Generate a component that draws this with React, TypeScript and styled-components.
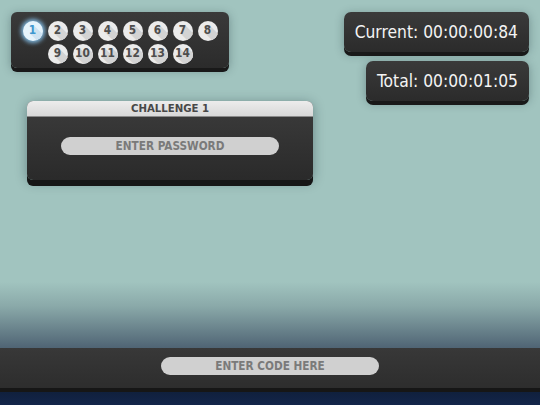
import React from "react";
import styled, { createGlobalStyle, css } from "styled-components";

const GlobalStyle = createGlobalStyle`
  html, body { margin: 0; padding: 0; height: 100%; }
  body { font-family: "DejaVu Sans", Verdana, sans-serif; }
  #root { height: 100%; }
`;

const condensed = css`
  font-family: "DejaVu Sans Condensed", "DejaVu Sans", sans-serif;
  font-stretch: condensed;
`;

const Page = styled.div`
  height: 100vh;
  display: flex;
  flex-direction: column;
  overflow: hidden;
`;

const Stage = styled.main`
  flex: 1;
  display: flex;
  justify-content: space-between;
  align-items: flex-start;
  padding: 12px 11px 0 11px;
  background: linear-gradient(to bottom, #a1c4bf 0%, #a1c4bf 81%, #8aa9a9 88%, #4f6474 100%);
`;

const LeftColumn = styled.div`
  display: flex;
  flex-direction: column;
  align-items: flex-start;
`;

const darkPanel = css`
  background: linear-gradient(to bottom, #3a3a3a 0%, #2b2b2b 100%);
  border-radius: 6px;
  box-shadow: 0 4px 0 #191919, 0 2px 10px rgba(20, 40, 50, 0.35);
`;

const NumberPanel = styled.nav`
  ${darkPanel};
  width: 218px;
  box-sizing: border-box;
  height: 56px;
  padding: 9px 11px 4px;
  display: flex;
  flex-wrap: wrap;
  justify-content: center;
  align-content: flex-start;
  column-gap: 5px;
  row-gap: 3px;
`;

const Level = styled.span<{ $active?: boolean }>`
  width: 20px;
  height: 20px;
  border-radius: 50%;
  overflow: hidden;
  display: flex;
  align-items: center;
  justify-content: center;
  ${condensed};
  font-weight: bold;
  font-size: 11.8px;
  line-height: 1;
  color: #4d4d4d;
  background: #ebebeb;
  text-shadow: 1px 1px 0 #d3d3d3, 2px 2px 0 #d3d3d3, 3px 3px 0 #d3d3d3,
    4px 4px 0 #d3d3d3, 5px 5px 0 #d3d3d3, 6px 6px 0 #d3d3d3, 7px 7px 0 #d3d3d3,
    8px 8px 0 #d3d3d3, 9px 9px 0 #d3d3d3, 10px 10px 0 #d3d3d3;
  ${(p) =>
    p.$active &&
    css`
      background: #e6f4fc;
      color: #3f97cf;
      text-shadow: 1px 1px 0 #cfe3f2, 2px 2px 0 #cfe3f2, 3px 3px 0 #cfe3f2,
        4px 4px 0 #cfe3f2, 5px 5px 0 #cfe3f2, 6px 6px 0 #cfe3f2,
        7px 7px 0 #cfe3f2, 8px 8px 0 #cfe3f2;
      box-shadow: 0 0 4px 2px rgba(140, 205, 250, 0.85);
    `}
`;

const ChallengePanel = styled.section`
  margin: 33px 0 0 16px;
  width: 286px;
  border-radius: 6px;
  overflow: hidden;
  background: linear-gradient(to bottom, #3c3c3c 0%, #2a2a2a 100%);
  box-shadow: 0 6px 0 #161616, 0 2px 12px rgba(20, 40, 50, 0.4);
`;

const ChallengeHeader = styled.h2`
  margin: 0;
  height: 16px;
  box-sizing: border-box;
  border-bottom: 1px solid #8a8a8a;
  background: linear-gradient(to bottom, #ececec 0%, #d8d8d8 100%);
  ${condensed};
  font-weight: bold;
  font-size: 11.3px;
  line-height: 16px;
  color: #484848;
  text-align: center;
`;

const ChallengeBody = styled.div`
  height: 63px;
  box-sizing: border-box;
  padding-top: 20px;
  display: flex;
  justify-content: center;
  align-items: flex-start;
`;

const PillInput = styled.input`
  width: 218px;
  height: 18px;
  box-sizing: border-box;
  border: none;
  outline: none;
  border-radius: 9px;
  padding: 0;
  background: #d0d0d0;
  ${condensed};
  font-weight: bold;
  font-size: 11.7px;
  text-align: center;
  color: #777;
  &::placeholder {
    color: #7a7a7a;
    opacity: 1;
  }
`;

const TimerColumn = styled.div`
  display: flex;
  flex-direction: column;
  align-items: flex-end;
  gap: 9px;
`;

const TimerBox = styled.div`
  ${darkPanel};
  border-radius: 7px;
  height: 40px;
  padding: 0 11px;
  display: flex;
  align-items: center;
  ${condensed};
  font-size: 17.3px;
  color: #f4f4f4;
  white-space: nowrap;
`;

const CodeBar = styled.footer`
  height: 44px;
  display: flex;
  align-items: center;
  justify-content: center;
  padding-bottom: 4px;
  box-sizing: border-box;
  background: linear-gradient(to bottom, #383838 0%, #2d2d2d 100%);
  border-bottom: 4px solid #161616;
`;

const BottomStrip = styled.div`
  height: 13px;
  background: linear-gradient(to bottom, #10203d 0%, #13254a 100%);
`;

const levels = Array.from({ length: 14 }, (_, i) => i + 1);

export default function App() {
  return (
    <Page>
      <GlobalStyle />
      <Stage>
        <LeftColumn>
          <NumberPanel>
            {levels.map((n) => (
              <Level key={n} $active={n === 1}>
                {n}
              </Level>
            ))}
          </NumberPanel>
          <ChallengePanel>
            <ChallengeHeader>CHALLENGE 1</ChallengeHeader>
            <ChallengeBody>
              <PillInput placeholder="ENTER PASSWORD" />
            </ChallengeBody>
          </ChallengePanel>
        </LeftColumn>
        <TimerColumn>
          <TimerBox>Current: 00:00:00:84</TimerBox>
          <TimerBox>Total: 00:00:01:05</TimerBox>
        </TimerColumn>
      </Stage>
      <CodeBar>
        <PillInput placeholder="ENTER CODE HERE" />
      </CodeBar>
      <BottomStrip />
    </Page>
  );
}
